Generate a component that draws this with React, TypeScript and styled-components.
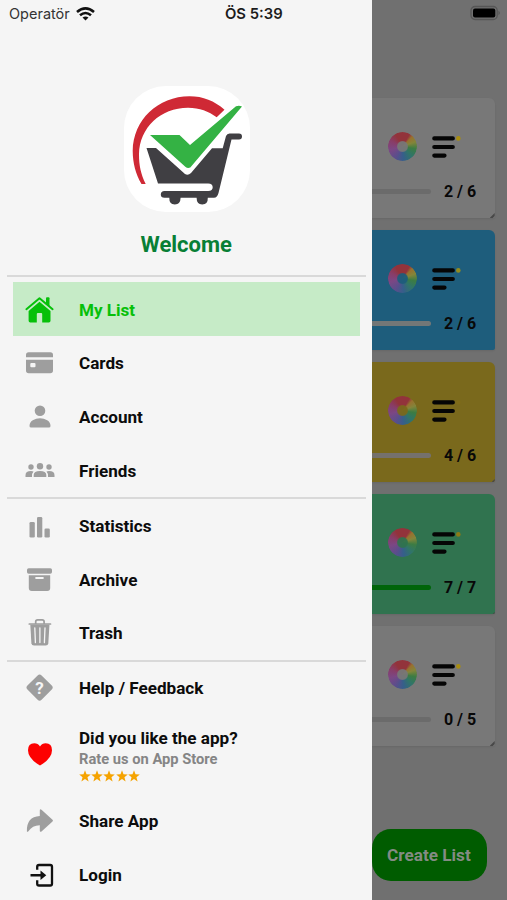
import React from 'react';
import styled, { createGlobalStyle } from 'styled-components';

const GlobalStyle = createGlobalStyle`
  * { box-sizing: border-box; }
  body { margin: 0; background: #707070; }
`;

const Screen = styled.div`
  display: flex;
  width: 507px;
  height: 900px;
  overflow: hidden;
  font-family: Roboto, "Liberation Sans", sans-serif;
`;

const Drawer = styled.aside`
  width: 372.4px;
  flex: none;
  height: 900px;
  background: #f5f5f5;
  display: flex;
  flex-direction: column;
`;

const StatusBar = styled.div`
  display: flex;
  align-items: center;
  height: 27px;
  padding-left: 9px;
  font-family: Inter, Roboto, sans-serif;
  font-size: 14.5px;
  color: #333;
`;

const Carrier = styled.span`
  width: 67px;
`;

const Clock = styled.span`
  margin-left: 130px;
  font-weight: 600;
  font-size: 14.8px;
  white-space: nowrap;
  color: #1c1c1c;
`;

const Logo = styled.div`
  width: 126px;
  height: 126px;
  margin: 59px 0 0 124px;
  border-radius: 42px;
  background: #fff;
  overflow: hidden;
  svg { display: block; }
`;

const Welcome = styled.h1`
  margin: 19px 0 0;
  height: 28px;
  line-height: 28px;
  text-align: center;
  font-size: 22px;
  font-weight: 700;
  color: #087f35;
`;

const Sections = styled.div`
  margin-top: 16px;
`;

const Section = styled.nav<{ $top: number; $height: number }>`
  margin: 0 6px 0 7px;
  padding: ${p => p.$top}px 6px 0;
  height: ${p => p.$height}px;
  flex: none;
  border-top: 2px solid #d9d9d9;
`;

const Item = styled.div<{ $active?: boolean; $height?: number; $color?: string; $drop?: boolean }>`
  display: flex;
  align-items: center;
  height: ${p => p.$height ?? 53.8}px;
  padding-left: 11px;
  padding-top: ${p => (p.$drop ? 1.6 : 0)}px;
  background: ${p => (p.$active ? '#c6ebc7' : 'transparent')};
  color: ${p => (p.$active ? '#06c00a' : '#0c0c0c')};
  font-size: 17.1px;
  font-weight: 700;
  svg {
    flex: none;
    margin-right: 23px;
    color: ${p => p.$color ?? '#9e9e9e'};
  }
`;

const RateText = styled.div`
  display: flex;
  flex-direction: column;
  line-height: 22px;
`;

const RateHint = styled.span`
  font-size: 14.7px;
  line-height: 20px;
  color: #858585;
`;

const Stars = styled.div`
  display: flex;
  height: 14px;
  align-items: center;
  svg { margin: 0 0.2px 0 0; color: #f5a300; }
`;

const Board = styled.main`
  flex: 1;
  height: 900px;
  background: #707070;
  overflow: hidden;
`;

const BatteryRow = styled.div`
  height: 98px;
  padding: 5px 5px 0 0;
  display: flex;
  justify-content: flex-end;
`;

const Cards = styled.div`
  display: flex;
  flex-direction: column;
  gap: 12px;
`;

const Card = styled.article<{ $bg: string }>`
  position: relative;
  height: 120px;
  width: 122.3px;
  background: ${p => p.$bg};
  border-radius: 0 6px 2px 0;
  box-shadow: 0 1px 2px rgba(0, 0, 0, 0.08);
`;

const CornerFold = styled.span<{ $size: number }>`
  position: absolute;
  right: 0;
  bottom: 0;
  width: ${p => p.$size}px;
  height: ${p => p.$size}px;
  background: #484848;
  clip-path: polygon(100% 0, 100% 60%, 60% 100%, 0 100%);
`;

const CardTools = styled.div`
  display: flex;
  align-items: center;
  height: 81px;
  padding: 16px 0 0 16px;
  gap: 15px;
`;

const Wheel = styled.div`
  width: 29px;
  height: 29px;
  border-radius: 50%;
  background: conic-gradient(from -30deg, #92333b 0 60deg, #98702f 75deg, #83853a 100deg, #3c7c43 130deg, #307568 165deg, #355f8a 205deg, #594e8c 240deg, #7b4784 285deg, #883d68 325deg, #92333b 360deg);
  mask: radial-gradient(circle, rgba(0, 0, 0, 0.05) 4.8px, #000 6px);
`;

const CardProgress = styled.div`
  display: flex;
  align-items: center;
  height: 24px;
  font-size: 16px;
  font-weight: 700;
  color: #080808;
`;

const Track = styled.div<{ $color: string }>`
  width: 58.5px;
  height: 5px;
  margin-right: 13px;
  border-radius: 0 3px 3px 0;
  background: ${p => p.$color};
`;

const CreateButton = styled.button`
  display: block;
  width: 115px;
  height: 52px;
  margin: 83px 0 0;
  padding: 0 2px 0 0;
  border: 0;
  border-radius: 19px;
  background: #005c00;
  color: #848b84;
  font: 700 17.2px Roboto, sans-serif;
`;

const Icon = ({ children }: { children: React.ReactNode }) => (
  <svg width="32" height="32" viewBox="0 0 32 32" fill="currentColor">{children}</svg>
);

const HomeIcon = () => (
  <Icon>
    <path d="M2.4 15.2 15.5 4.3l13.1 10.9" fill="none" stroke="currentColor" strokeWidth="2" strokeLinecap="round" strokeLinejoin="round" />
    <path d="M22 4.2q0-1 1-1h1.500q1 0 1 1v8L22 9.200z" />
    <path d="M15.500 7.700 26.500 17v9.800q0 1.700-1.700 1.700H18.200V20q0-1-1-1h-3.400q-1 0-1 1v8.500H6.300q-1.700 0-1.700-1.700V17z" />
  </Icon>
);
const CardIcon = () => (
  <Icon>
    <path d="M2 10.300V8q0-2.700 2.700-2.700h21.600Q29 5.300 29 8v2.300z" />
    <path fillRule="evenodd" d="M2 12.800h27v10.700q0 2.700-2.700 2.700H4.700Q2 26.200 2 23.500zM7.300 16q-1 0-1 1v2.300q0 1 1 1h3.200q1 0 1-1V17q0-1-1-1z" />
  </Icon>
);
const PersonIcon = () => (
  <Icon>
    <circle cx="16" cy="9.800" r="5.300" />
    <path d="M5.500 25q0-3.800 3.300-5.800 3.200-2 7.200-2t7.200 2q3.300 2 3.300 5.800 0 1.600-1.600 1.600H7.100Q5.500 26.600 5.500 25z" />
  </Icon>
);
const FriendsIcon = () => (
  <Icon>
    <circle cx="16" cy="11.300" r="3.200" />
    <circle cx="7" cy="12" r="2.700" />
    <circle cx="25" cy="12" r="2.700" />
    <path d="M9.700 22v-2q0-4 6.300-4t6.300 4v2zM1.500 22v-1.800q0-4.200 5.500-4.200 1.500 0 2.500.5-1.700 1.500-1.500 5.500zM30.500 22v-1.800q0-4.200-5.500-4.200-1.500 0-2.500.5 1.700 1.500 1.500 5.500z" />
  </Icon>
);
const StatsIcon = () => (
  <Icon>
    <rect x="5.500" y="12" width="5.300" height="15.500" rx="1.300" />
    <rect x="13" y="7" width="5.300" height="20.500" rx="1.300" />
    <rect x="20.500" y="18.500" width="5.300" height="9" rx="1.300" />
  </Icon>
);
const ArchiveIcon = () => (
  <Icon>
    <rect x="3" y="4.300" width="25" height="5.400" rx="1.700" />
    <path fillRule="evenodd" d="M4.800 11.200h21.400V24q0 3-3 3H7.800q-3 0-3-3zM12 13q-.8 0-.8 1t.8 1h7q.8 0 .8-1t-.8-1z" />
  </Icon>
);
const TrashIcon = () => (
  <Icon>
    <path d="M5.300 7h21.200M11.700 6.500V4.700q0-1.900 1.900-1.900h4.600q1.900 0 1.900 1.900v1.800" fill="none" stroke="currentColor" strokeWidth="1.700" strokeLinecap="round" />
    <path d="M6.300 7.500h19.200l-1.200 18.700q-.2 2.400-2.600 2.400H10q-2.400 0-2.600-2.400z" />
    <path d="m10.800 10.800.6 14.800M15.900 10.800v14.800M21 10.800l-.6 14.800" stroke="#f5f5f5" strokeWidth="1.300" strokeLinecap="round" />
  </Icon>
);
const QuestionMark = styled.text`
  font: 700 17px Roboto, sans-serif;
  fill: #f5f5f5;
`;
const HelpIcon = () => (
  <Icon>
    <rect x="5.600" y="5.600" width="20" height="20" rx="2.800" transform="rotate(45 15.600 15.600)" />
    <QuestionMark x="15.600" y="21.700" textAnchor="middle">?</QuestionMark>
  </Icon>
);
const HeartIcon = () => (
  <Icon>
    <path d="M16 26.600Q4 19.500 4 11.300 4 4.300 10.300 4.300q3.700 0 5.700 3.200 2-3.200 5.700-3.200 6.300 0 6.300 7 0 8.200-12 15.300z" />
  </Icon>
);
const ShareIcon = () => (
  <Icon>
    <path d="M15.800 5.500q0-2 1.700-.8l11 10q1 .8 0 1.700l-11 10q-1.700 1.200-1.700-.8v-5.400q-7.300-.1-11.400 6-.9 1.200-1.500.2-.6-14.600 12.900-15.500z" />
  </Icon>
);
const LoginIcon = () => (
  <Icon>
    <path d="M13.200 10.700V7.800Q13.200 6 15 6h11.200Q28 6 28 7.800v16.900q0 1.800-1.800 1.800H15q-1.800 0-1.800-1.800v-3.400" fill="none" stroke="currentColor" strokeWidth="2.300" />
    <path d="M6.500 15h10v-3.500l5.800 4.700-5.800 4.700v-3.500h-10z" />
  </Icon>
);
const Star = () => (
  <svg width="12" height="12" viewBox="0 0 24 24" fill="currentColor">
    <path d="m12 .6 3 8.100 8.600.4-6.700 5.300 2.300 8.400-7.200-4.800-7.200 4.800 2.300-8.400L.4 9.100 9 8.700z" />
  </svg>
);
const WifiIcon = () => (
  <svg width="19" height="14" viewBox="0 0 19 14" fill="none" stroke="#111" strokeWidth="2.600">
    <path d="M1 5q8.500-7.200 17 0M4 8.300q5.500-4.600 11 0" />
    <path d="M6.500 10.600q3-2.200 6 0l-3 3z" fill="#111" stroke="none" />
  </svg>
);
const LogoArt = () => (
  <svg width="126" height="126" viewBox="124 86 126 126">
    <path d="M132.700 151C133 120 158 96.300 189.500 96.300c13.500 0 25 4.700 35 13.400l-7.800 7.500c-8-6-17-9.300-28.700-9.500-27.500 0-48.500 20-49 46.300-.1 11.500 2 20.500 6.700 30h-4.200c-6-10-8.700-21-8.800-33z" fill="#cf2935" />
    <path d="M150 135h29.500l10.500 10L236 106.300q3-1.200 6 .2l-51.700 61q-2.600 1.300-5-.8z" fill="#34b244" />
    <path d="M146.500 148h9.500l29 26q3 2 6-1l21-24.700h10.700l3.300-12.300q1-2.500 3.500-2.500h9.500q3 0 3 3t-3 3h-7.500L218.500 193q-1.200 4.700-4.500 4.700h-6.200q.3 6.700-5.600 6.700-5.600 0-5.600-6.700h-16q-.1 6.700-5.800 6.700t-5.500-6.700H164.500q-3.700 0-3.700-3.300t3.700-3.400h43.700q4.500 0 4.500-3.700 0-3.800-4.500-3.800H158z" fill="#403f43" />
  </svg>
);
const Battery = () => (
  <svg width="32" height="16" viewBox="0 0 32 16">
    <rect x="1" y="1.500" width="26.200" height="13" rx="4" fill="none" stroke="#565656" strokeWidth="1.300" />
    <rect x="3" y="3.500" width="22.300" height="9" rx="2" fill="#000" />
    <path d="M28.600 5.800q2 2.200 0 4.400z" fill="#4b4b4b" />
  </svg>
);
const ListLines = ({ dot }: { dot: string }) => (
  <svg width="32" height="24" viewBox="0 0 32 24">
    <path d="M2.300 3.400h18.500M2.300 12h18.500M2.300 20.600h10.200" stroke="#050505" strokeWidth="4.200" strokeLinecap="round" />
    <circle cx="26.300" cy="3.400" r="2.300" fill={dot} />
  </svg>
);

const lists = [
  { bg: '#787878', track: '#6b6b6b', dot: '#a88d12', count: '2 / 6', fold: 5 },
  { bg: '#1e5d7c', track: '#737777', dot: '#928b20', count: '2 / 6', fold: 0 },
  { bg: '#7a691c', track: '#75716c', dot: '#806c19', count: '4 / 6', fold: 3 },
  { bg: '#30734f', track: '#00650a', dot: '#8b7a16', count: '7 / 7', fold: 2 },
  { bg: '#787878', track: '#6b6b6b', dot: '#a88d12', count: '0 / 5', fold: 5 },
];

function MenuSections() {
  return (
    <Sections>
      <Section $top={5} $height={222}>
        <Item $drop $active $color="#06c00a"><HomeIcon />My List</Item>
        <Item $drop><CardIcon />Cards</Item>
        <Item $drop><PersonIcon />Account</Item>
        <Item $drop><FriendsIcon />Friends</Item>
      </Section>
      <Section $top={0} $height={162.5}>
        <Item><StatsIcon />Statistics</Item>
        <Item><ArchiveIcon />Archive</Item>
        <Item><TrashIcon />Trash</Item>
      </Section>
      <Section $top={0} $height={240}>
        <Item><HelpIcon />Help / Feedback</Item>
        <Item $height={79} $color="#fd0000">
          <HeartIcon />
          <RateText>
            Did you like the app?
            <RateHint>Rate us on App Store</RateHint>
            <Stars><Star /><Star /><Star /><Star /><Star /></Stars>
          </RateText>
        </Item>
        <Item><ShareIcon />Share App</Item>
        <Item $color="#111"><LoginIcon />Login</Item>
      </Section>
    </Sections>
  );
}

export default function App() {
  return (
    <>
      <GlobalStyle />
      <Screen>
        <Drawer>
          <StatusBar>
            <Carrier>Operatör</Carrier>
            <WifiIcon />
            <Clock>ÖS 5:39</Clock>
          </StatusBar>
          <Logo><LogoArt /></Logo>
          <Welcome>Welcome</Welcome>
          <MenuSections />
        </Drawer>
        <Board>
          <BatteryRow><Battery /></BatteryRow>
          <Cards>
            {lists.map((list, i) => (
              <Card key={i} $bg={list.bg}>
                <CardTools>
                  <Wheel />
                  <ListLines dot={list.dot} />
                </CardTools>
                <CardProgress>
                  <Track $color={list.track} />
                  {list.count}
                </CardProgress>
                <CornerFold $size={list.fold} />
              </Card>
            ))}
          </Cards>
          <CreateButton>Create List</CreateButton>
        </Board>
      </Screen>
    </>
  );
}
